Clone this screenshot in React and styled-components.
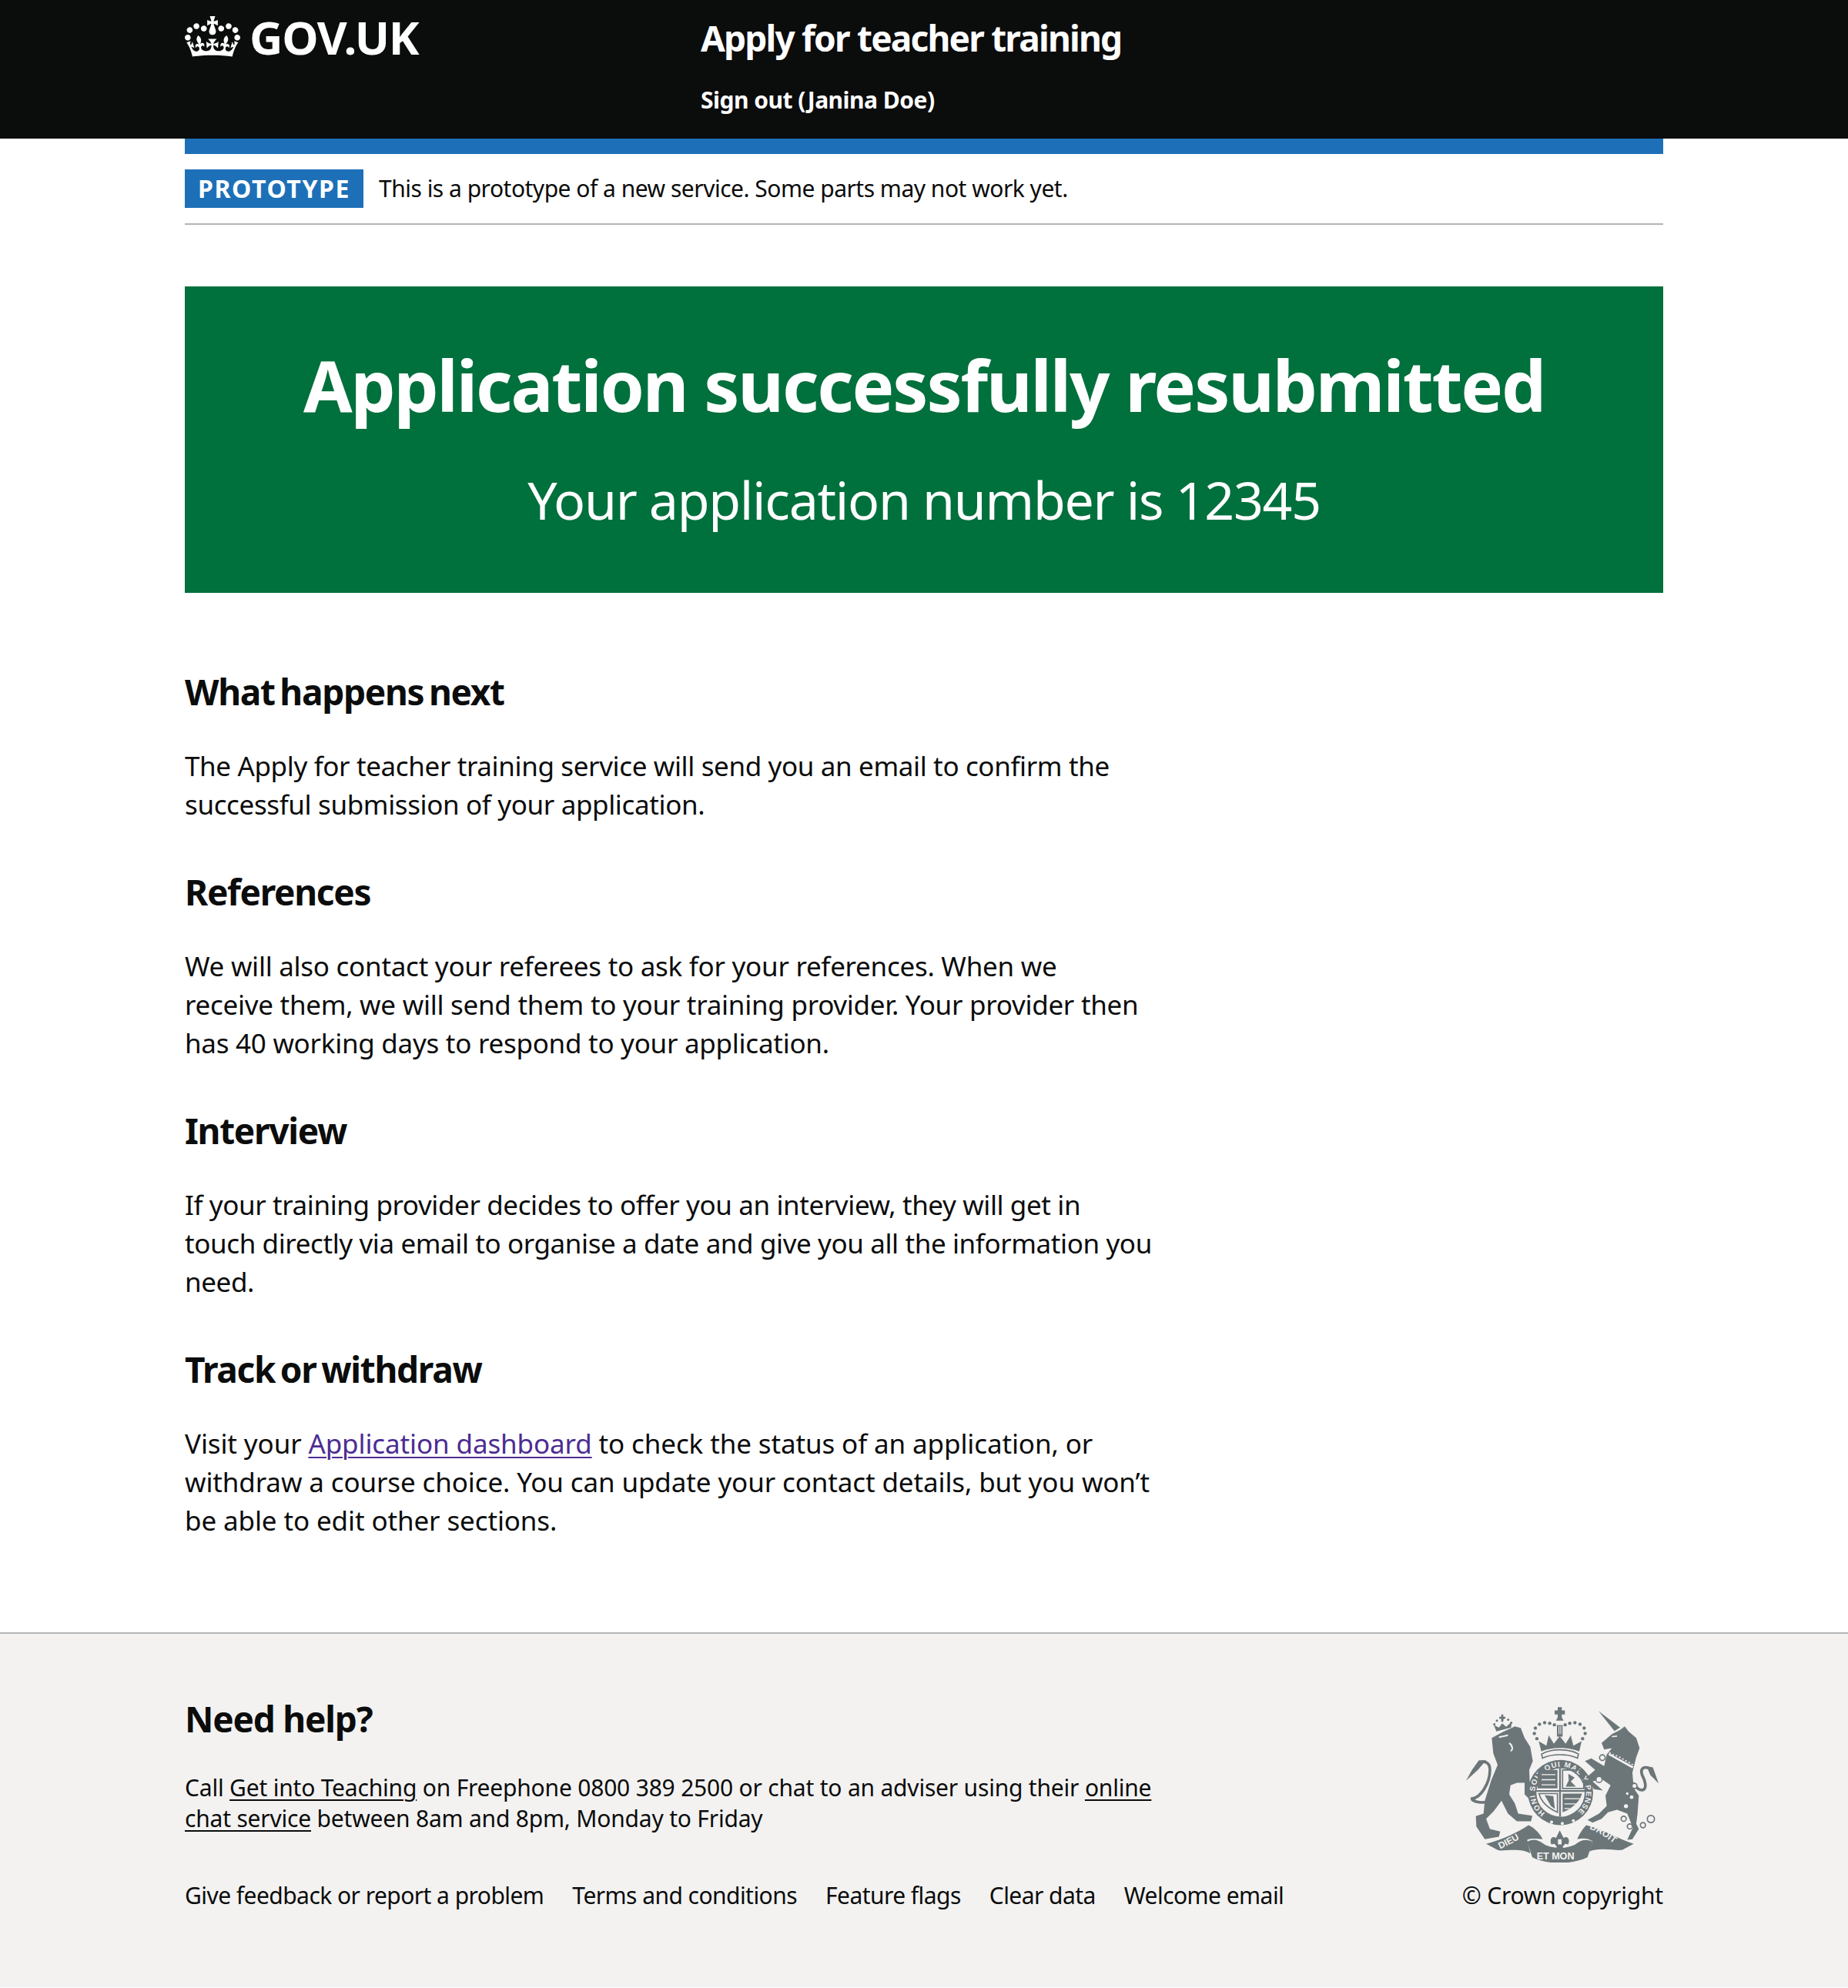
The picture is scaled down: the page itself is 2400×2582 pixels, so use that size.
import React from 'react';
import styled, { createGlobalStyle } from 'styled-components';

const Global = createGlobalStyle`
  html, body { margin: 0; padding: 0; background: #fff; }
  body { font-family: "Noto Sans", "Liberation Sans", sans-serif; color: #0b0c0c; }
`;
const Header = styled.header`
  height: 180px; background: #0b0c0c; color: #fff; box-sizing: border-box;
`;
const Wrap = styled.div`
  width: 1920px; margin: 0 auto;
`;
const HeaderRow = styled(Wrap)`
  display: flex;
`;
const LogoBlock = styled.div`
  width: 670px; display: flex; align-items: flex-start; padding-top: 21px; gap: 12px;
`;
const LogoText = styled.a`
  font-size: 60px; line-height: 54px; font-weight: 700; letter-spacing: -1.3px; color: #fff;
`;
const ServiceBlock = styled.div`
  padding-top: 19px; display: flex; flex-direction: column;
`;
const ServiceName = styled.a`
  font-size: 46px; line-height: 60px; font-weight: 700; color: #fff; letter-spacing: -1.8px;
`;
const SignOut = styled.a`
  margin-top: 31px; font-size: 30px; line-height: 40px; font-weight: 700; color: #fff; letter-spacing: -0.5px;
`;
const BlueBar = styled(Wrap)`
  height: 20px; background: #1d70b8;
`;
const Phase = styled(Wrap)`
  display: flex; align-items: center; gap: 20px; padding: 20px 0; border-bottom: 2px solid #b1b4b6;
`;
const Tag = styled.strong`
  background: #1d70b8; color: #fff; font-size: 32px; line-height: 50px; height: 50px; letter-spacing: 1.6px; font-weight: 700; width: 232px; text-align: center; flex-shrink: 0; white-space: nowrap;
`;
const PhaseText = styled.span`
  font-size: 30px; line-height: 40px; letter-spacing: -0.5px;
`;
const Main = styled(Wrap)`
  padding: 80px 0 120px;
`;
const Panel = styled.div`
  background: #00703c; color: #fff; text-align: center; height: 398px; box-sizing: border-box; padding-top: 73px; margin-bottom: 100px;
`;
const PanelTitle = styled.h1`
  margin: 0 0 52px; font-size: 92px; line-height: 110px; font-weight: 700; letter-spacing: -2.15px;
`;
const PanelBody = styled.div`
  font-size: 68px; line-height: 84px; letter-spacing: -1.28px;
`;
const Column = styled.div`
  width: 1300px;
`;
const H2 = styled.h2`
  margin: 0 0 44px; font-size: 46px; line-height: 56px; font-weight: 700; letter-spacing: -1.3px; word-spacing: -4px;
`;
const P = styled.p`
  margin: 0 0 60px; font-size: 35px; line-height: 50px; letter-spacing: ${(p) => p.$tracking || '-0.37px'};
  &:last-child { margin-bottom: 0; }
`;
const Link = styled.a`
  color: #4c2c92; text-decoration: underline; text-decoration-thickness: 2px; text-underline-offset: 4px;
`;
const Footer = styled.footer`
  background: #f3f2f1; border-top: 2px solid #b1b4b6; padding: 80px 0 99px;
`;
const FooterRow = styled(Wrap)`
  display: flex; justify-content: space-between;
`;
const FooterLeft = styled.div``;
const FooterTitle = styled.h2`
  margin: 0 0 40px; font-size: 46px; line-height: 60px; font-weight: 700; letter-spacing: -1.2px;
`;
const FooterP = styled.p`
  margin: 0 0 60px; width: 1300px; font-size: 30px; line-height: 40px; letter-spacing: -0.2px;
`;
const FooterLink = styled.a`
  color: #0b0c0c; text-decoration: underline; text-decoration-thickness: 2px; text-underline-offset: 4px;
`;
const MetaLinks = styled.div`
  display: flex; gap: 37px; font-size: 30px; line-height: 40px; letter-spacing: -0.55px; white-space: nowrap;
`;
const Right = styled.div`
  display: flex; flex-direction: column; justify-content: space-between; align-items: flex-end; flex-shrink: 0; padding-top: 15px; font-size: 30px; line-height: 40px; letter-spacing: -0.2px; white-space: nowrap;
`;
const CrestSvg = styled.svg`
  display: block; margin-right: 6px;
`;
const CrestWord = styled.text`
  font-family: "Liberation Sans", sans-serif; font-weight: 700; fill: #f3f2f1;
`;

const crown = "M25 30.2c3.5 1.5 7.7-.2 9.1-3.7 1.5-3.6-.2-7.8-3.9-9.2-3.6-1.4-7.6.3-9.1 3.9-1.4 3.5.3 7.5 3.9 9zM9 39.5c3.6 1.5 7.8-.2 9.2-3.7 1.5-3.6-.2-7.8-3.9-9.1-3.6-1.5-7.6.2-9.1 3.8-1.4 3.5.3 7.5 3.8 9zM4.4 57.2c3.5 1.5 7.7-.2 9.1-3.8 1.5-3.6-.2-7.7-3.9-9.1-3.5-1.5-7.6.3-9.1 3.8-1.4 3.5.3 7.6 3.9 9.1zm38.3-21.4c3.5 1.5 7.7-.2 9.1-3.8 1.5-3.6-.2-7.7-3.9-9.1-3.6-1.5-7.6.3-9.1 3.8-1.3 3.6.4 7.7 3.9 9.1zm64.4-5.6c-3.6 1.5-7.8-.2-9.1-3.7-1.5-3.6.2-7.8 3.8-9.2 3.6-1.4 7.7.3 9.2 3.9 1.3 3.5-.4 7.5-3.9 9zm15.9 9.3c-3.6 1.5-7.7-.2-9.1-3.7-1.5-3.6.2-7.8 3.7-9.1 3.6-1.5 7.7.2 9.2 3.8 1.5 3.5-.3 7.5-3.8 9zm4.7 17.7c-3.6 1.5-7.8-.2-9.2-3.8-1.5-3.6.2-7.7 3.9-9.1 3.6-1.5 7.7.3 9.2 3.8 1.3 3.5-.4 7.6-3.9 9.1zM89.3 35.8c-3.6 1.5-7.8-.2-9.2-3.8-1.4-3.6.2-7.7 3.9-9.1 3.6-1.5 7.7.3 9.2 3.8 1.4 3.6-.3 7.7-3.9 9.1zM69.7 17.7l8.9 4.7V9.3l-8.9 2.8c-.2-.3-.5-.6-.9-.9L72.4 0H59.6l3.5 11.2c-.3.3-.6.5-.9.9l-8.8-2.8v13.1l8.8-4.7c.3.3.6.7.9.9l-5 15.4v.1c-.2.8-.4 1.6-.4 2.4 0 4.1 3.1 7.5 7 8.1h.2c.3 0 .7.1 1 .1.4 0 .7 0 1-.1h.2c4-.6 7.1-4.1 7.1-8.1 0-.8-.1-1.7-.4-2.4V34l-5.1-15.4c.4-.2.7-.6 1-.9zM66 92.8c16.9 0 32.8 1.1 47.1 3.2 4-16.9 8.9-26.7 14-33.5l-9.6-3.4c1 4.9 1.1 7.2 0 10.2-1.5-1.4-3-4.3-4.2-8.7L108.6 76c2.8-2 5-3.2 7.5-3.3-4.4 9.4-10 11.9-13.6 11.2-4.3-.8-6.3-4.6-5.6-7.9 1-4.7 5.7-5.9 8-.5 4.3-8.7-3-11.4-7.6-8.8 7.1-7.2 7.9-13.5 2.1-21.1-8 6.1-8.1 12.3-4.5 20.8-4.7-5.4-12.1-2.5-9.5 6.2 3.4-5.2 7.9-2 7.2 3.1-.6 4.3-6.4 7.8-13.5 7.2-10.3-.9-10.9-8-11.2-13.8 2.5-.5 7.1 1.8 11 7.3L80.2 60c-4.1 4.4-8 5.3-12.3 5.4 1.4-4.4 8-11.6 8-11.6H55.5s6.4 7.2 7.9 11.6c-4.2-.1-8-1-12.3-5.4l1.4 16.4c3.9-5.5 8.5-7.7 10.9-7.3-.3 5.8-.9 12.8-11.1 13.8-7.2.6-12.9-2.9-13.5-7.2-.7-5 3.8-8.3 7.1-3.1 2.7-8.7-4.6-11.6-9.4-6.2 3.7-8.5 3.6-14.7-4.6-20.8-5.8 7.6-5 13.9 2.2 21.1-4.7-2.6-11.9.1-7.7 8.8 2.3-5.5 7.1-4.2 8.1.5.7 3.3-1.3 7.1-5.7 7.9-3.5.7-9-1.8-13.5-11.2 2.5.1 4.7 1.3 7.5 3.3l-4.7-15.4c-1.2 4.4-2.7 7.2-4.3 8.7-1.1-3-.9-5.3 0-10.2l-9.5 3.4c5 6.9 9.9 16.7 14 33.5 14.8-2.1 30.8-3.2 47.7-3.2z";

const Crown = () => (
  <svg width="72" height="53" viewBox="0 0 132 97" fill="#fff" aria-hidden="true"><path d={crown} /></svg>
);

const INK = '#6c7679';
const PAPER = '#f3f2f1';
const crownDots = [[348,178],[338,158],[342,137],[358,122],[378,116],[398,118],[416,124],[526,178],[536,158],[532,137],[516,122],[496,116],[476,118],[458,124]];
const rings = [[603,252,11],[590,337,12],[728,362,10],[686,490,10],[710,520,10],[761,515,10],[792,491,14]];
const bodyDots = [[717,406,7],[695,441,8],[700,392,5]];
const lionDots = [[182,122],[192,108],[214,100],[236,104],[248,116]];

const Crest = () => (
  <CrestSvg width="250" height="202" viewBox="72 55 750 605" fill={INK} aria-hidden="true">
    <path d="M155 425C120 430 95 420 95 412C130 408 165 350 165 300C165 270 140 258 118 278" fill="none" stroke={INK} strokeWidth="11" />
    <path d="M122 262L150 262L118 300L72 342L95 300Z" />
    <path d="M172 175L215 152L262 130L285 136L300 175L322 210L332 265L318 300L320 345L340 370L345 410L315 410L300 395L300 350L270 350L245 360L240 395L262 430L275 470L330 478L325 500L270 500L235 470L210 420L180 460L150 490L165 530L205 540L200 560L145 570L112 520L110 480L140 470L145 420L170 340L195 280L178 235Z" />
    <path d="M200 172L235 165M240 195C255 205 255 225 245 225" fill="none" stroke={PAPER} strokeWidth="6" />
    <path d="M190 150L180 125L200 135L213 118L228 132L250 112L247 135Z" />
    {lionDots.map(([x, y]) => <circle key={x} cx={x} cy={y} r="4.5" />)}
    <path d="M209 84H217V93H225V100H217V112H209V100H201V93H209Z" />
    <path d="M722 350C745 390 785 390 765 335C740 290 770 280 795 300" fill="none" stroke={INK} strokeWidth="11" />
    <path d="M775 285L800 290L822 352L790 320Z" />
    <path d="M588 70L672 135L650 148Z" />
    <path d="M600 195L640 160L670 145L690 130L705 150L735 175L748 215L735 250L720 310L725 370L745 400L740 470L735 510L745 530L720 570L700 572L722 525L700 470L660 455L625 465L600 490L565 505L545 495L590 470L620 440L615 400L635 360L600 335L565 345L605 380L570 375L540 330L575 300L535 265L560 255L610 285L620 240L640 215L610 220Z" />
    <path d="M628 238L722 290" fill="none" stroke={PAPER} strokeWidth="8" />
    <path d="M630 232L645 240L660 245L675 252L690 262L705 270L722 280" fill="none" stroke={PAPER} strokeWidth="5" strokeDasharray="6 8" />
    <path d="M640 170L660 168" fill="none" stroke={PAPER} strokeWidth="5" />
    {rings.map(([x, y, r]) => <circle key={x} cx={x} cy={y} r={r} fill={PAPER} stroke={INK} strokeWidth="5" />)}
    {bodyDots.map(([x, y, r]) => <circle key={x} cx={x} cy={y} r={r} fill={PAPER} />)}
    {crownDots.map(([x, y]) => <circle key={`${x}-${y}`} cx={x} cy={y} r="6.5" />)}
    <path d="M426 125H448V170H426Z" />
    <path d="M434 128V160M441 128V160" stroke={PAPER} strokeWidth="3" />
    <path d="M429 55H445V68H457V84H445V95L452 108H422L429 95V84H417V68H429Z" />
    <path d="M355 188L385 205L394 165L414 198L437 168L460 198L480 165L490 205L522 188L513 228C470 210 405 210 365 228Z" />
    <path d="M366 238C405 216 470 216 510 238L506 254C470 236 405 236 370 254Z" fill={PAPER} stroke={INK} strokeWidth="5" />
    <circle cx="440" cy="388" r="127" />
    <path id="garter" d="M380 468A100 100 0 1 1 500 468" fill="none" />
    <CrestWord fontSize="29"><textPath href="#garter" textLength="490" lengthAdjust="spacing">HONI SOIT QUI MAL Y PENSE</textPath></CrestWord>
    <circle cx="440" cy="388" r="94" fill={PAPER} />
    <path d="M352 300H428V372H350Z" />
    <path d="M448 300H526C532 325 532 350 530 372H448Z" fill="none" stroke={INK} strokeWidth="5" />
    <path d="M470 315L495 330L480 345L500 365H460L472 340Z" />
    <path d="M356 392H428V465C395 450 365 425 356 392Z" fill="none" stroke={INK} strokeWidth="5" />
    <path d="M378 398L412 402L418 452L402 440Z" />
    <path d="M448 392H524C514 425 485 450 448 465Z" />
    <path d="M366 318H420M366 338H420M366 358H420M455 412H515M455 432H500M455 450H475" stroke={PAPER} strokeWidth="4" fill="none" />
    <path d="M438 294V482M346 382H534" stroke={INK} strokeWidth="7" fill="none" />
    <circle cx="405" cy="503" r="6" fill={PAPER} />
    <circle cx="447" cy="508" r="6" fill={PAPER} />
    <circle cx="490" cy="498" r="6" fill={PAPER} />
    <path d="M150 588C215 570 270 545 315 515C340 525 365 555 370 570C350 568 330 565 310 572L322 625C280 600 210 620 195 612Z" />
    <path d="M310 580C330 567 350 570 370 585C400 610 475 610 505 585C525 570 545 570 565 580L545 640C480 670 390 670 330 640Z" />
    <path d="M505 570C515 545 528 528 540 515C600 530 670 570 725 588L680 612C650 615 590 600 552 618L565 578C545 565 525 565 505 570Z" />
    <path id="dieu" d="M205 608C240 592 280 570 315 546" fill="none" />
    <path id="droit" d="M552 530C595 545 635 575 672 606" fill="none" />
    <CrestWord fontSize="36"><textPath href="#dieu">DIEU</textPath></CrestWord>
    <CrestWord fontSize="36"><textPath href="#droit">DROIT</textPath></CrestWord>
    <CrestWord fontSize="38" x="347" y="648">ET MON</CrestWord>
    <path d="M437 535L452 565C462 555 480 565 470 590L458 588L448 600L458 612H416L426 600L416 588L404 590C394 565 412 555 422 565Z" />
    <path d="M430 570H444V590H430Z" fill={PAPER} />
  </CrestSvg>
);

export default function App() {
  return (
    <>
      <Global />
      <Header>
        <HeaderRow>
          <LogoBlock><Crown /><LogoText>GOV.UK</LogoText></LogoBlock>
          <ServiceBlock>
            <ServiceName>Apply for teacher training</ServiceName>
            <SignOut>Sign out (Janina Doe)</SignOut>
          </ServiceBlock>
        </HeaderRow>
      </Header>
      <BlueBar />
      <Phase>
        <Tag>PROTOTYPE</Tag>
        <PhaseText>This is a prototype of a new service. Some parts may not work yet.</PhaseText>
      </Phase>
      <Main>
        <Panel>
          <PanelTitle>Application successfully resubmitted</PanelTitle>
          <PanelBody>Your application number is 12345</PanelBody>
        </Panel>
        <Column>
          <H2>What happens next</H2>
          <P>The Apply for teacher training service will send you an email to confirm the<br />successful submission of your application.</P>
          <H2>References</H2>
          <P $tracking="-0.27px">We will also contact your referees to ask for your references. When we<br />receive them, we will send them to your training provider. Your provider then<br />has 40 working days to respond to your application.</P>
          <H2>Interview</H2>
          <P $tracking="-0.4px">If your training provider decides to offer you an interview, they will get in<br />touch directly via email to organise a date and give you all the information you<br />need.</P>
          <H2>Track or withdraw</H2>
          <P $tracking="-0.12px">Visit your <Link>Application dashboard</Link> to check the status of an application, or<br />withdraw a course choice. You can update your contact details, but you won’t<br />be able to edit other sections.</P>
        </Column>
      </Main>
      <Footer>
        <FooterRow>
          <FooterLeft>
            <FooterTitle>Need help?</FooterTitle>
            <FooterP>Call <FooterLink>Get into Teaching</FooterLink> on Freephone 0800 389 2500 or chat to an adviser using their <FooterLink>online<br />chat service</FooterLink> between 8am and 8pm, Monday to Friday</FooterP>
            <MetaLinks>
              <span>Give feedback or report a problem</span>
              <span>Terms and conditions</span>
              <span>Feature flags</span>
              <span>Clear data</span>
              <span>Welcome email</span>
            </MetaLinks>
          </FooterLeft>
          <Right>
            <Crest />
            <span>© Crown copyright</span>
          </Right>
        </FooterRow>
      </Footer>
    </>
  );
}
